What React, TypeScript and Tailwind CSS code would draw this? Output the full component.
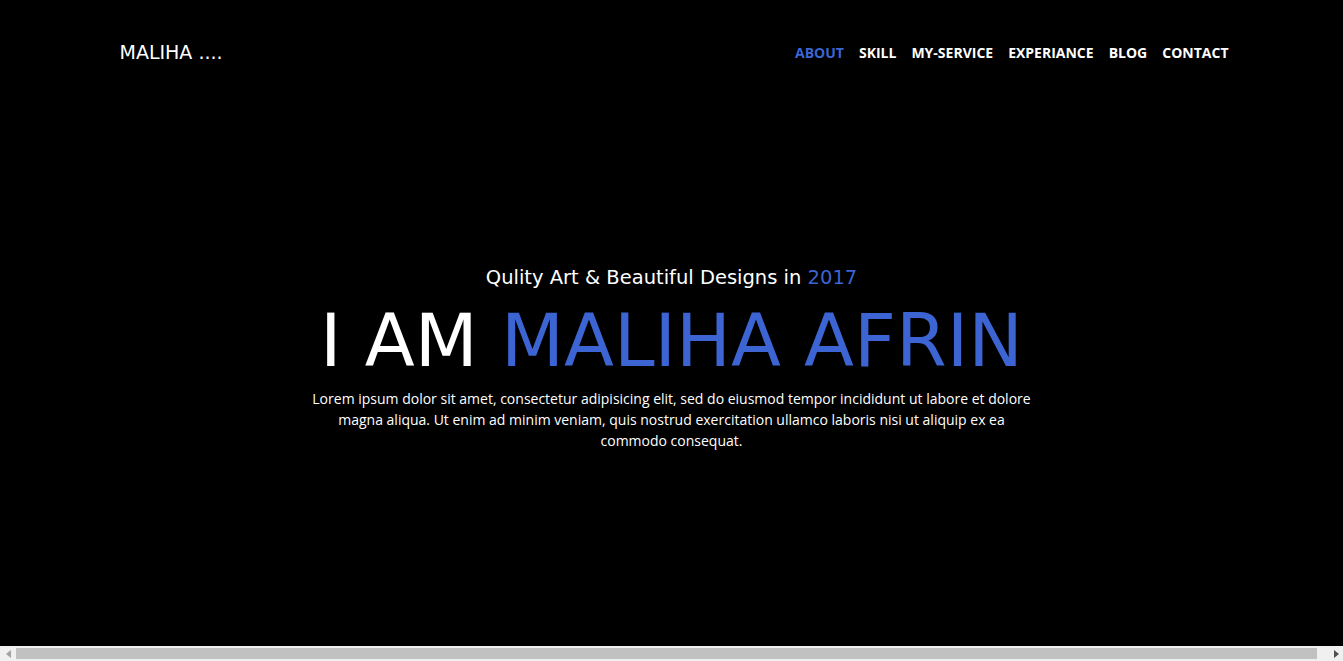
const navItems = ["About", "Skill", "My-Service", "Experiance", "Blog", "Contact"];

const heading = { fontFamily: "'DejaVu Sans', 'Noto Sans', sans-serif" };

const Header = () => {
   return (
      <header className="mx-auto flex w-[1140px] items-center justify-between pl-[18px] pr-[13px] pt-[38px]">
         <a href="#" className="text-[19px] leading-[28px] text-white" style={heading}>
            MALIHA ....
         </a>
         <nav>
            <ul className="flex items-center gap-[15px] font-['Open_Sans',sans-serif] text-[14px] font-bold uppercase">
               {navItems.map((item, i) => (
                  <li key={item}>
                     <a href="#" className={i === 0 ? "text-[#3c64d2]" : "text-white"}>
                        {item}
                     </a>
                  </li>
               ))}
            </ul>
         </nav>
      </header>
   );
};

const Hero = () => {
   return (
      <section className="flex flex-col items-center pt-[198px] text-center">
         <h4 className="text-[19.5px] leading-[28px] text-white" style={heading}>
            Qulity Art &amp; Beautiful Designs in <span className="text-[#3c64d2]">2017</span>
         </h4>
         <h1 className="mt-[7px] text-[73px] leading-[84px] text-white" style={heading}>
            I AM <span className="text-[#3c64d2]">MALIHA AFRIN</span>
         </h1>
         <p className="mt-[5px] w-[730px] font-['Open_Sans',sans-serif] text-[14px] leading-[21px] text-white">
            Lorem ipsum dolor sit amet, consectetur adipisicing elit, sed do eiusmod tempor incididunt ut labore et dolore
            magna aliqua. Ut enim ad minim veniam, quis nostrud exercitation ullamco laboris nisi ut aliquip ex ea
            commodo consequat.
         </p>
      </section>
   );
};

const ScrollBar = () => {
   return (
      <div className="flex h-[15px] items-stretch bg-[#f0f0f0]">
         <div className="flex w-[16px] items-center justify-center">
            <svg width="5" height="8" viewBox="0 0 5 8"><path d="M5 0 L0 4 L5 8 Z" fill="#a3a3a3" /></svg>
         </div>
         <div className="my-[2px] flex-1 bg-[#c1c1c1]" />
         <div className="flex w-[26px] items-center justify-end pr-[4px]">
            <svg width="5" height="8" viewBox="0 0 5 8"><path d="M0 0 L5 4 L0 8 Z" fill="#505050" /></svg>
         </div>
      </div>
   );
};

export default function App() {
   return (
      <div className="flex h-[661px] w-full flex-col overflow-hidden bg-black">
         <div className="h-[646px]">
            <Header />
            <Hero />
         </div>
         <ScrollBar />
      </div>
   );
}
